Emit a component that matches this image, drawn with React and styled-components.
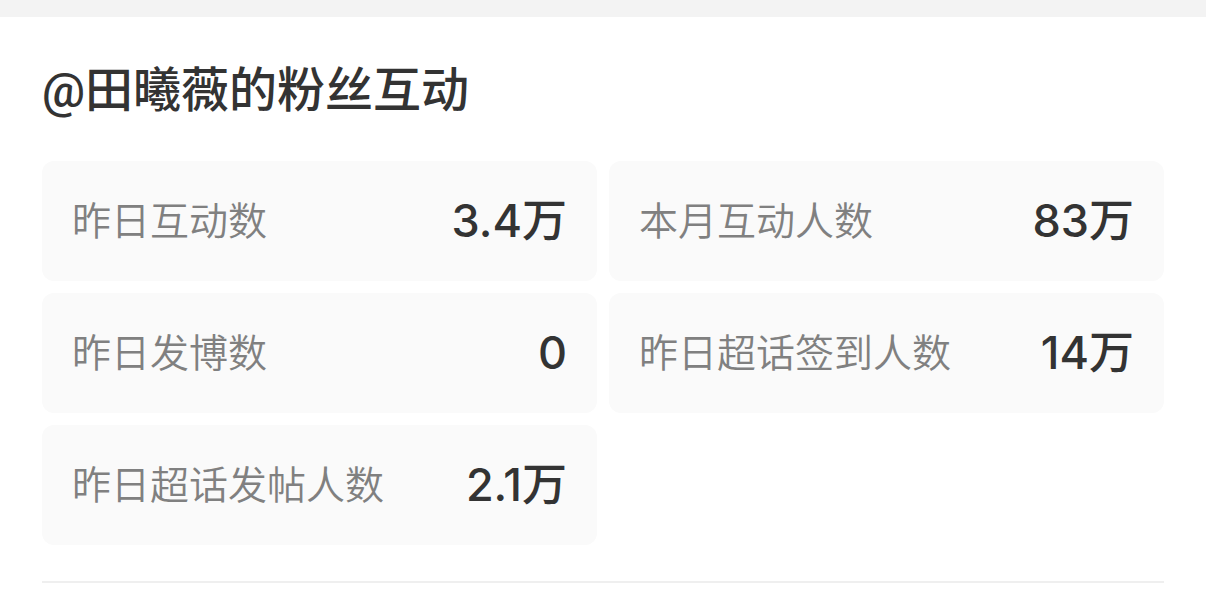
import React from 'react';
import styled, { createGlobalStyle } from 'styled-components';

const GlobalStyle = createGlobalStyle`
  * { box-sizing: border-box; }
  body {
    margin: 0;
    background: #fff;
    color: #333;
    font-family: Inter, "Noto Sans CJK SC", sans-serif;
  }
`;

const Page = styled.main`
  border-top: 17px solid #f3f3f3;
  padding: 38px 42px 0;
`;

const Title = styled.h1`
  margin: 0;
  font-family: Roboto, "Noto Sans CJK SC", sans-serif;
  font-size: 48px;
  line-height: 72px;
  font-weight: 500;
`;

const Stats = styled.dl`
  display: grid;
  grid-template-columns: repeat(2, 1fr);
  gap: 12px;
  margin: 34px 0 0;
  padding-bottom: 36px;
  border-bottom: 2px solid #efefef;
`;

const Card = styled.div`
  display: flex;
  align-items: center;
  justify-content: space-between;
  height: 120px;
  padding: 0 30px;
  border-radius: 12px;
  background: #fafafa;
`;

const Label = styled.dt`
  font-size: 39px;
  line-height: 56px;
  font-weight: 350;
  color: #808080;
`;

const Value = styled.dd`
  margin: 0;
  font-size: 45px;
  line-height: 56px;
  font-weight: 500;
`;

const stats = [
  ['昨日互动数', '3.4万'],
  ['本月互动人数', '83万'],
  ['昨日发博数', '0'],
  ['昨日超话签到人数', '14万'],
  ['昨日超话发帖人数', '2.1万'],
];

export default function App() {
  return (
    <>
      <GlobalStyle />
      <Page lang="zh-CN">
        <Title>@田曦薇的粉丝互动</Title>
        <Stats>
          {stats.map(([label, value]) => (
            <Card key={label}>
              <Label>{label}</Label>
              <Value>{value}</Value>
            </Card>
          ))}
        </Stats>
      </Page>
    </>
  );
}
